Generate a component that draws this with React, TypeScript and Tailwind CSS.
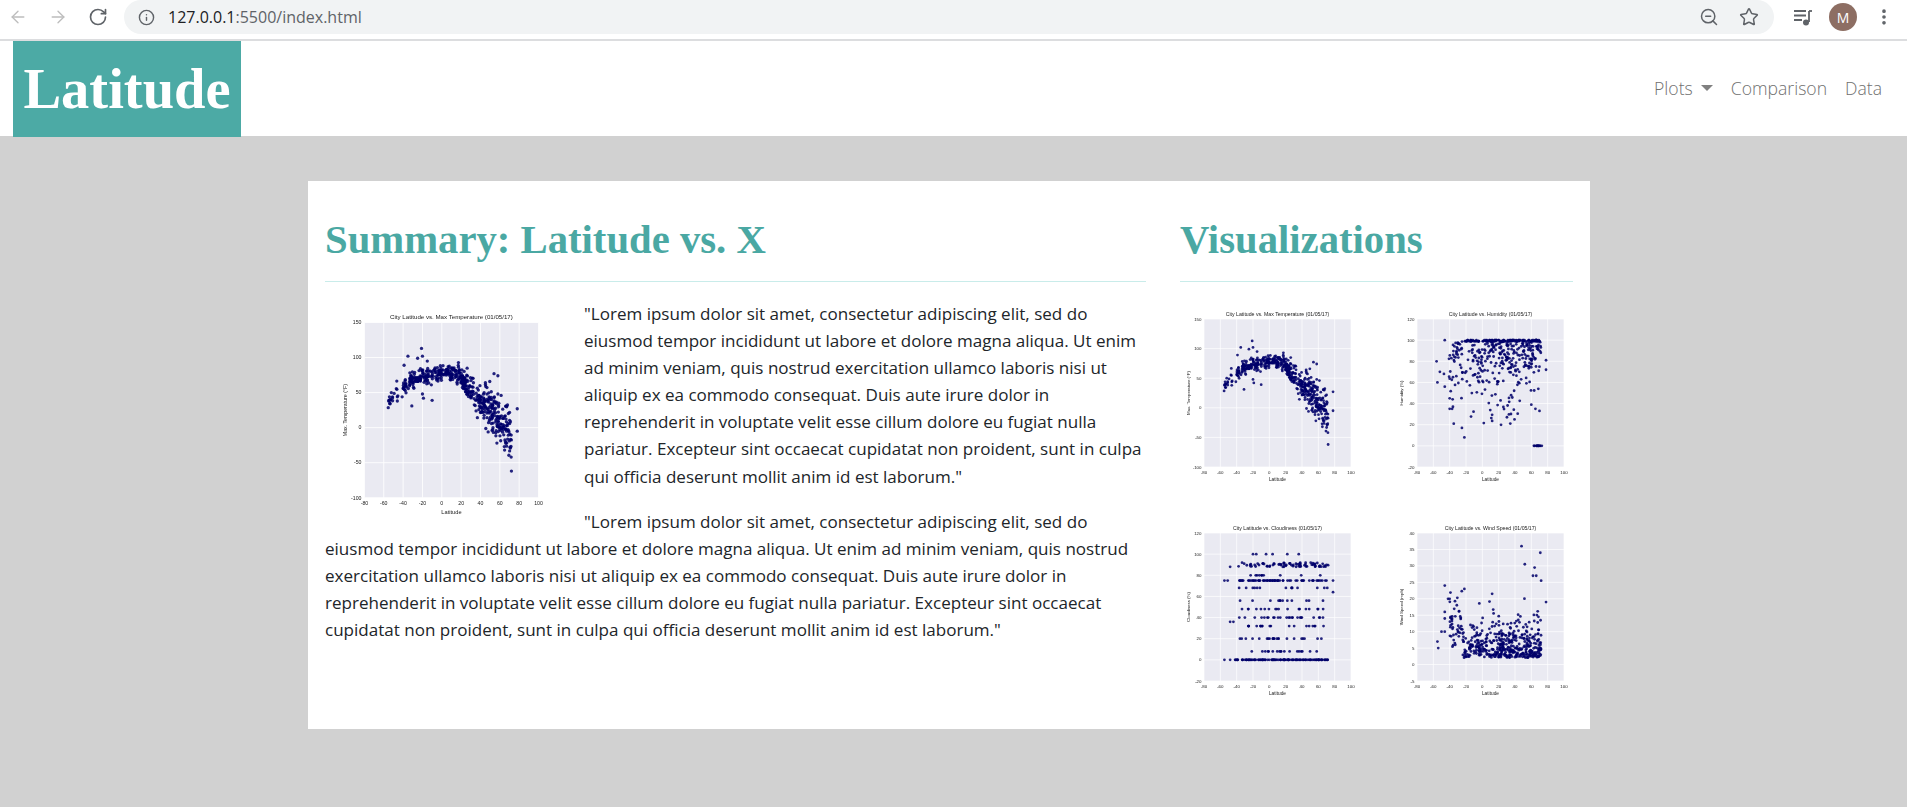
import { useId } from "react";
import { ArrowLeft, ArrowRight, RotateCw, Info, ZoomOut, Star, MoreVertical } from "lucide-react";

const LOREM =
  '"Lorem ipsum dolor sit amet, consectetur adipiscing elit, sed do eiusmod tempor incididunt ut labore et dolore magna aliqua. Ut enim ad minim veniam, quis nostrud exercitation ullamco laboris nisi ut aliquip ex ea commodo consequat. Duis aute irure dolor in reprehenderit in voluptate velit esse cillum dolore eu fugiat nulla pariatur. Excepteur sint occaecat cupidatat non proident, sunt in culpa qui officia deserunt mollit anim id est laborum."';

type Pt = [number, number];

function rng(seed: number) {
  let s = seed;
  return () => {
    s = (s * 1664525 + 1013904223) % 4294967296;
    return s / 4294967296;
  };
}

function gauss(r: () => number) {
  return (r() + r() + r() + r() - 2) / 0.58;
}

function sampleLat(r: () => number) {
  const u = r();
  if (u < 0.03) return -56 + r() * 14;
  if (u < 0.24) return -40 + r() * 35;
  if (u < 0.46) return -5 + r() * 30;
  return 20 + r() * 52;
}

function interp(x: number, table: Pt[]) {
  for (let i = 1; i < table.length; i++) {
    if (x <= table[i][0]) {
      const [a, b] = table[i - 1];
      const [c, d] = table[i];
      return b + ((x - a) / (c - a)) * (d - b);
    }
  }
  return table[table.length - 1][1];
}

function tempPoints(): Pt[] {
  const r = rng(11);
  const curve: Pt[] = [[-56, 40], [-45, 55], [-30, 68], [-15, 73], [0, 78], [18, 74], [30, 55], [42, 32], [52, 22], [60, 8], [68, -5], [72, -25]];
  const pts: Pt[] = [];
  for (let i = 0; i < 520; i++) {
    const lat = sampleLat(r);
    const spread = lat > 45 ? 17 : lat > 25 ? 10 : 6;
    pts.push([lat, interp(lat, curve) + gauss(r) * spread]);
  }
  return pts.concat([[-35, 102], [-21, 113], [-25, 99], [-20, 102], [-39, 89], [-15, 95], [54, 77], [58, 74], [78, 27], [78, -5], [-31, 31], [-10, 39], [-19, 42], [72, -62], [58, 48], [-20, 48], [-55, 38], [-53, 40], [-51, 44], [-46, 44], [-46, 38], [-41, 44]]);
}

function humidityPoints(): Pt[] {
  const r = rng(29);
  const pts: Pt[] = [];
  for (let i = 0; i < 120; i++) pts.push([-22 + r() * 94, 100 - Math.floor(r() * 2)]);
  for (let i = 0; i < 300; i++) {
    const lat = Math.min(72, sampleLat(r));
    pts.push([lat < -42 ? lat + 15 : lat, 100 - Math.abs(gauss(r)) * 22]);
  }
  for (let i = 0; i < 28; i++) pts.push([-15 + r() * 60, 18 + r() * 35]);
  for (let i = 0; i < 12; i++) pts.push([62 + r() * 11, 0]);
  return pts.concat([[-46, 100], [-56, 80], [-55, 60], [-46, 56], [-22, 8], [-25, 17], [-35, 21], [78, 72], [78, 81], [60, 39], [65, 35], [70, 33], [-40, 35], [-37, 35], [-36, 37], [-40, 45], [-52, 70], [-47, 68]]);
}

function cloudPoints(): Pt[] {
  const r = rng(47);
  const pts: Pt[] = [];
  const bands: [number, number][] = [[0, 110], [75, 60], [90, 75], [20, 22], [40, 24], [32, 18], [48, 18], [56, 12], [68, 14], [8, 18], [80, 10]];
  for (const [level, n] of bands) {
    for (let i = 0; i < n; i++) {
      const lat = level === 0 ? -42 + r() * 114 : -38 + r() * 110;
      pts.push([lat, level + (level === 90 ? (r() - 0.5) * 4 : 0)]);
    }
  }
  return pts.concat([[-20, 100], [-16, 100], [-4, 100], [4, 100], [22, 100], [36, 100], [-48, 88], [-55, 0], [-48, 0], [78, 75], [78, 64], [-55, 75], [-51, 75], [-48, 36], [-44, 36]]);
}

function windPoints(): Pt[] {
  const r = rng(71);
  const pts: Pt[] = [];
  for (let i = 0; i < 500; i++) {
    const lat = sampleLat(r);
    if (lat < -42) continue;
    const south = lat < -25;
    const base = 0.6 + Math.abs(gauss(r)) * (south ? 6 : 3.6) + (r() < 0.22 ? r() * 11 : 0);
    pts.push([lat, base + 1.5 + (south ? 3 : 0)]);
  }
  return pts.concat([[48, 36], [71, 34], [52, 30.5], [64, 29.5], [-46, 24], [-22, 23], [12, 21.5], [72, 25.5], [78, 19], [66, 27], [62, 27], [-55, 7], [-54, 5], [-46, 16], [-42, 20], [-40, 20], [-46, 14], [-46, 10], [-50, 10]]);
}

type ChartSpec = {
  title: string;
  ylabel: string;
  yMin: number;
  yMax: number;
  yStep: number;
  points: Pt[];
};

const CHARTS: Record<string, ChartSpec> = {
  temp: { title: "City Latitude vs. Max Temperature (01/05/17)", ylabel: "Max. Temperature (°F)", yMin: -100, yMax: 150, yStep: 50, points: tempPoints() },
  hum: { title: "City Latitude vs. Humidity (01/05/17)", ylabel: "Humidity (%)", yMin: -20, yMax: 120, yStep: 20, points: humidityPoints() },
  cloud: { title: "City Latitude vs. Cloudiness (01/05/17)", ylabel: "Cloudiness (%)", yMin: -20, yMax: 120, yStep: 20, points: cloudPoints() },
  wind: { title: "City Latitude vs. Wind Speed (01/05/17)", ylabel: "Wind Speed (mph)", yMin: -5, yMax: 40, yStep: 5, points: windPoints() },
};

function Scatter({ spec, className }: { spec: ChartSpec; className: string }) {
  const fid = useId().replace(/[^a-zA-Z0-9]/g, "");
  const px = 24, py = 19, pw = 147, ph = 148;
  const X = (v: number) => px + ((v + 80) / 180) * pw;
  const Y = (v: number) => py + ((spec.yMax - v) / (spec.yMax - spec.yMin)) * ph;
  const xt: number[] = [];
  for (let v = -80; v <= 100; v += 20) xt.push(v);
  const yt: number[] = [];
  for (let v = spec.yMin; v <= spec.yMax; v += spec.yStep) yt.push(v);
  return (
    <svg viewBox="0 0 179 190" className={className} fontFamily="Liberation Sans, sans-serif">
      <defs>
        <filter id={fid} filterUnits="userSpaceOnUse" x="0" y="0" width="179" height="190">
          <feGaussianBlur stdDeviation="0.45" />
        </filter>
      </defs>
      <g filter={`url(#${fid})`}>
        <rect x={px} y={py} width={pw} height={ph} fill="#eaeaf2" />
        {xt.map((v) => <line key={v} x1={X(v)} x2={X(v)} y1={py} y2={py + ph} stroke="#fff" strokeWidth="0.7" />)}
        {yt.map((v) => <line key={v} y1={Y(v)} y2={Y(v)} x1={px} x2={px + pw} stroke="#fff" strokeWidth="0.7" />)}
        {spec.points.map(([x, y], i) => <circle key={i} cx={X(x)} cy={Y(y)} r="1.4" fill="#00006a" fillOpacity="0.85" />)}
        {xt.map((v) => <text key={v} x={X(v)} y={py + ph + 6.5} fontSize="4.4" textAnchor="middle" fill="#222">{v}</text>)}
        {yt.map((v) => <text key={v} x={px - 2.5} y={Y(v) + 1.5} fontSize="4.4" textAnchor="end" fill="#222">{v}</text>)}
        <text x={px + pw / 2} y={py - 3} fontSize="5.2" textAnchor="middle" fill="#222">{spec.title}</text>
        <text x={px + pw / 2} y={py + ph + 14} fontSize="4.8" textAnchor="middle" fill="#222">Latitude</text>
        <text transform={`translate(9.5 ${py + ph / 2}) rotate(-90)`} fontSize="4.4" textAnchor="middle" fill="#222">{spec.ylabel}</text>
      </g>
    </svg>
  );
}

function PlaylistIcon() {
  return (
    <svg width="22" height="22" viewBox="0 0 22 22" fill="none" stroke="#5f6368" strokeWidth="1.8">
      <path d="M2 5h12M2 9.5h12M2 14h8" />
      <path d="M17 5v11" />
      <path d="M17 5h3" />
      <circle cx="14" cy="16.5" r="3" fill="#5f6368" stroke="none" />
    </svg>
  );
}

export default function App() {
  return (
    <div className="h-[807px] overflow-hidden bg-[#d1d1d1] font-['Open_Sans',sans-serif]">
      {/* browser toolbar */}
      <div className="flex h-[41px] items-start border-b-2 border-[#dcdddf] bg-white">
        <div className="flex h-[34px] w-[124px] items-center pl-[8px] text-[#bdbdbd]">
          <ArrowLeft size={20} strokeWidth={1.6} />
          <ArrowRight size={20} strokeWidth={1.6} className="ml-[20px]" />
          <RotateCw size={20} strokeWidth={2} className="ml-[20px] text-[#5f6368]" />
        </div>
        <div className="flex h-[34px] w-[1650px] items-center rounded-r-[17px] rounded-l-[17px] bg-[#f1f3f4] pl-[14px] pr-[14px]">
          <Info size={17} strokeWidth={2} className="text-[#5f6368]" />
          <span className="ml-[13px] text-[16px] text-[#5f6368]">
            <span className="text-[#202124]">127.0.0.1</span>:5500/index.html
          </span>
          <ZoomOut size={20} strokeWidth={1.8} className="ml-auto mr-[20px] text-[#5f6368]" />
          <Star size={20} strokeWidth={1.8} className="mr-[1px] text-[#5f6368]" />
        </div>
        <div className="flex h-[34px] flex-1 items-center pl-[18px]">
          <PlaylistIcon />
          <div className="ml-[15px] flex h-[28px] w-[28px] items-center justify-center rounded-full bg-[#8d6e63] text-[14px] text-white">M</div>
          <MoreVertical size={20} strokeWidth={2.4} className="ml-[17px] text-[#5f6368]" />
        </div>
      </div>

      {/* site navbar */}
      <nav className="flex h-[95px] items-start justify-between bg-white pl-[13px] pr-[25px]">
        <a className="flex h-[96px] w-[228px] items-center justify-center bg-[#4caaa5] font-['Liberation_Serif',serif] text-[56.5px] font-bold text-white">
          Latitude
        </a>
        <ul className="flex h-[95px] items-center gap-[18px] text-[17.6px] font-light text-[#707070]">
          <li className="flex items-center">
            Plots
            <span className="ml-[8px] h-0 w-0 border-x-[6px] border-t-[6px] border-x-transparent border-t-[#808080]" />
          </li>
          <li>Comparison</li>
          <li>Data</li>
        </ul>
      </nav>

      {/* content card */}
      <div className="pr-[9px] pt-[45px]">
        <main className="mx-auto flex h-[548px] w-[1282px] gap-[34px] bg-white pl-[17px]">
          <section className="w-[821px]">
            <h1 className="pt-[35px] font-['Liberation_Serif',serif] text-[40.7px] font-bold leading-[48px] text-[#4aa8a3]">
              Summary: Latitude vs. X
            </h1>
            <hr className="mt-[17px] border-[#c9ecea]" />
            <div className="pt-[18px] text-[17.05px] leading-[27.1px] text-[#212529]">
              <Scatter spec={CHARTS.temp} className="float-left ml-[11px] mr-[36px] h-[225px] w-[212px]" />
              <p className="mb-[18px]">{LOREM}</p>
              <p>{LOREM}</p>
            </div>
          </section>
          <section className="w-[393px]">
            <h2 className="pt-[35px] font-['Liberation_Serif',serif] text-[40.7px] font-bold leading-[48px] text-[#4aa8a3]">
              Visualizations
            </h2>
            <hr className="mt-[17px] border-[#c9ecea]" />
            <div className="grid grid-cols-[179px_179px] gap-x-[34px] gap-y-[24px] pt-[18px]">
              <Scatter spec={CHARTS.temp} className="h-[190px] w-[179px]" />
              <Scatter spec={CHARTS.hum} className="h-[190px] w-[179px]" />
              <Scatter spec={CHARTS.cloud} className="h-[190px] w-[179px]" />
              <Scatter spec={CHARTS.wind} className="h-[190px] w-[179px]" />
            </div>
          </section>
        </main>
      </div>
    </div>
  );
}
